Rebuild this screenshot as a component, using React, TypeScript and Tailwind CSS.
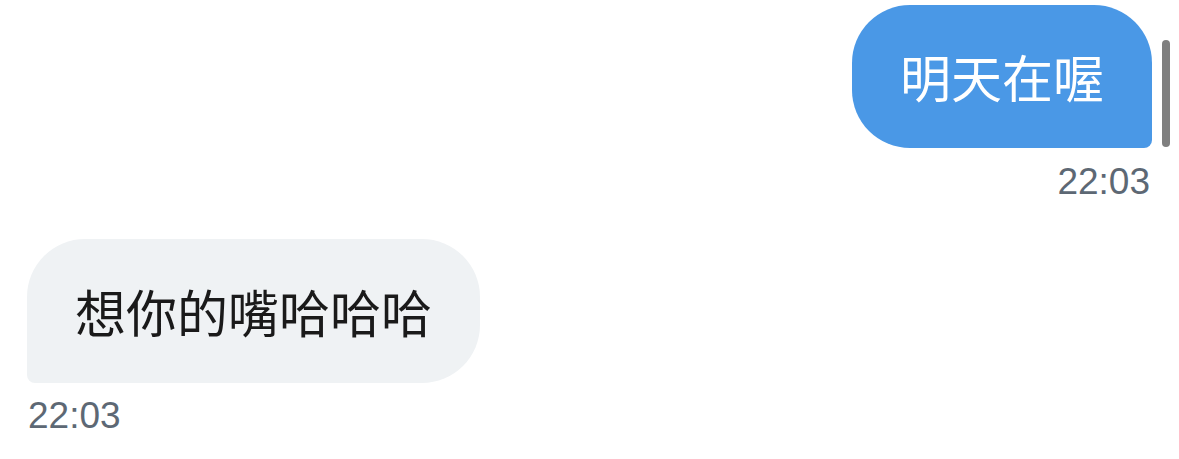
import React from 'react';

const cjk = { fontFamily: '"Noto Sans CJK TC", "Noto Sans CJK SC", sans-serif' };
const latin = { fontFamily: '"Liberation Sans", Arial, sans-serif' };

export default function App() {
  return (
    <div className="relative w-[1179px] h-[459px] bg-white overflow-hidden">
      {/* scrollbar thumb */}
      <div className="absolute left-[1162px] top-[40px] w-[8px] h-[107px] rounded-full bg-[#7f7f7f]"></div>

      <div className="flex flex-col pt-[5px] px-[27px]">
        {/* outgoing */}
        <div className="flex flex-col items-end">
          <div
            className="h-[143px] flex items-center px-[48px] bg-[#4a98e6] text-white text-[51px] leading-none rounded-[58px] rounded-br-[8px]"
            style={cjk}
          >
            明天在喔
          </div>
          <div className="mt-[15px] mr-[2px] text-[37px] leading-none text-[#5d6874]" style={latin}>
            22:03
          </div>
        </div>

        {/* incoming */}
        <div className="flex flex-col items-start mt-[39px]">
          <div
            className="h-[144px] flex items-center px-[48px] bg-[#eff2f4] text-[#1a1a1a] text-[51px] leading-none rounded-[58px] rounded-bl-[8px]"
            style={cjk}
          >
            想你的嘴哈哈哈
          </div>
          <div className="mt-[14px] ml-[1px] text-[37px] leading-none text-[#5d6874]" style={latin}>
            22:03
          </div>
        </div>
      </div>
    </div>
  );
}
